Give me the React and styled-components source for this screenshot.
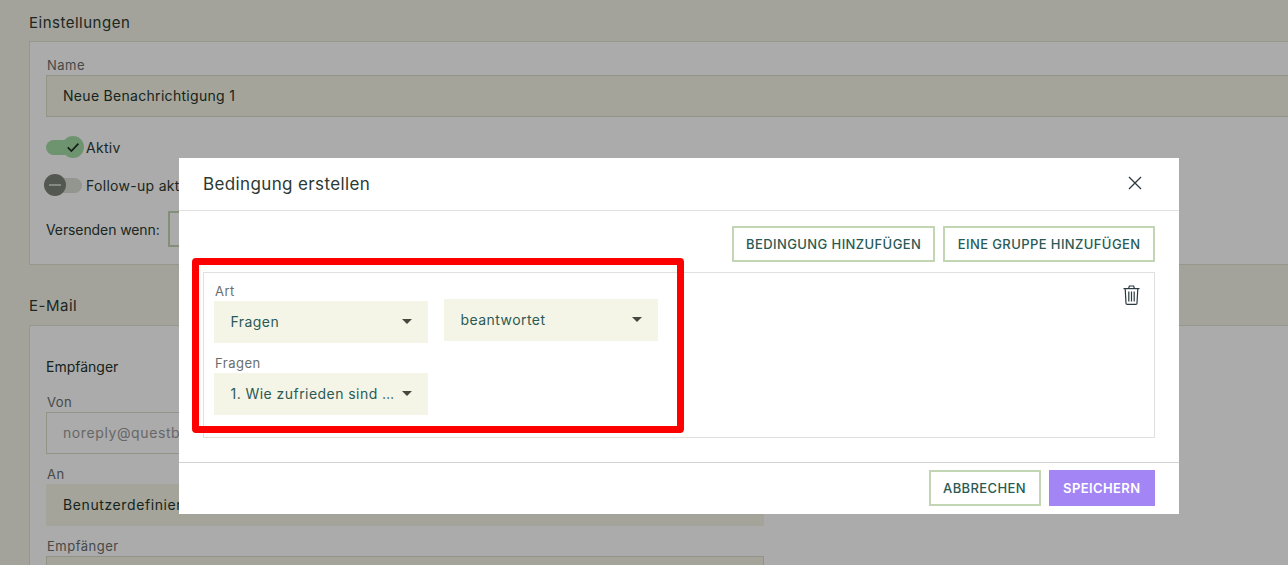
import React from 'react';
import styled, {createGlobalStyle} from 'styled-components';

const GlobalStyle = createGlobalStyle`
  html, body {
    margin: 0;
    padding: 0;
    height: 565px;
    overflow: hidden;
    background: #f4f4e8;
    font-family: Inter, "Liberation Sans", sans-serif;
    color: #24352c;
  }
`;

const Page = styled.div`
  position: relative;
  width: 1288px;
  height: 565px;
  overflow: hidden;
  padding: 14px 0 0 29px;
  box-sizing: border-box;
`;

const SectionTitle = styled.div`
  font-size: 15px;
  line-height: 18px;
  letter-spacing: 0.5px;
  color: #2c3a32;
  margin-bottom: ${({$gap}) => $gap || 9}px;
`;

const Card = styled.div`
  width: 1300px;
  height: ${({$height}) => $height}px;
  box-sizing: border-box;
  background: #fff;
  border: 1px solid #dfe3d0;
  padding: ${({$top}) => $top}px 0 0 16px;
  margin-bottom: ${({$gap}) => $gap || 0}px;
`;

const Label = styled.div`
  font-size: 13px;
  line-height: 16px;
  letter-spacing: 0.5px;
  color: #6a6e6b;
  margin: 0 0 2px 1px;
`;

const Input = styled.div`
  width: ${({$wide}) => ($wide ? '1300px' : '718px')};
  height: 42px;
  box-sizing: border-box;
  display: flex;
  align-items: center;
  padding: 0 0 1px 16px;
  font-size: 14px;
  letter-spacing: ${({$wide}) => ($wide ? 0.3 : 0.6)}px;
  background: ${({$disabled}) => ($disabled ? '#fff' : '#f5f5e7')};
  border: 1px solid ${({$plain}) => ($plain ? 'transparent' : '#dcdccb')};
  color: ${({$disabled}) => ($disabled ? '#9a9a9a' : '#24352c')};
  margin-bottom: ${({$gap}) => $gap || 0}px;
`;

const ToggleRow = styled.div`
  display: flex;
  align-items: center;
  height: 24px;
  margin-top: ${({$top}) => $top}px;
  font-size: 14px;
  letter-spacing: 0.3px;
  color: #2c3a32;
`;

const Track = styled.div`
  position: relative;
  width: ${({$on}) => ($on ? 34 : 36)}px;
  height: 15px;
  border-radius: 8px;
  margin-right: ${({$on}) => ($on ? 6 : 4)}px;
  background: ${({$on}) => ($on ? '#a5dca6' : '#dcdfd6')};
`;

const Knob = styled.div`
  position: absolute;
  top: -4px;
  ${({$on}) => ($on ? 'right: -4px;' : 'left: -2px;')}
  width: 22px;
  height: 22px;
  border-radius: 50%;
  display: flex;
  align-items: center;
  justify-content: center;
  background: ${({$on}) => ($on ? '#a5dca6' : '#7d8379')};
`;

const SendRow = styled.div`
  display: flex;
  align-items: center;
  gap: 8px;
  margin-top: 14px;
  font-size: 14px;
  letter-spacing: -0.1px;
  color: #2c3a32;
`;

const SendButton = styled.div`
  width: 180px;
  height: 36px;
  box-sizing: border-box;
  border: 2px solid #c3d6b4;
`;

const Heading = styled.div`
  font-size: 14px;
  line-height: 18px;
  color: #24352c;
  margin-bottom: 18px;
`;

const Overlay = styled.div`
  position: absolute;
  inset: 0;
  background: rgba(0, 0, 0, 0.33);
`;

const Modal = styled.div`
  position: absolute;
  left: 179px;
  top: 158px;
  width: 1000px;
  height: 356px;
  background: #fff;
  display: flex;
  flex-direction: column;
`;

const ModalHeader = styled.div`
  height: 53px;
  box-sizing: border-box;
  border-bottom: 1px solid #e2e2e2;
  display: flex;
  align-items: center;
  justify-content: space-between;
  padding: 0 37px 0 24px;
  font-size: 17px;
  letter-spacing: 0.37px;
  color: #2b3a33;
`;

const CloseButton = styled.div`
  display: flex;
  margin-bottom: 2px;
`;

const ModalBody = styled.div`
  height: 252px;
  box-sizing: border-box;
  padding: 15px 24px 0;
  border-bottom: 1px solid #d2d2d2;
`;

const Actions = styled.div`
  display: flex;
  justify-content: flex-end;
  gap: 8px;
`;

const Button = styled.div`
  height: 36px;
  box-sizing: border-box;
  display: flex;
  align-items: center;
  padding: 0 ${({$pad}) => $pad || 12}px 1px;
  font-size: 13px;
  font-weight: ${({$primary}) => ($primary ? 600 : 500)};
  letter-spacing: 0.4px;
  color: ${({$primary}) => ($primary ? '#fff' : '#2a5a55')};
  background: ${({$primary}) => ($primary ? '#a385f6' : '#fff')};
  border: ${({$primary}) => ($primary ? 'none' : '2px solid #c3d6b4')};
`;

const ConditionBox = styled.div`
  position: relative;
  height: 166px;
  box-sizing: border-box;
  margin-top: 10px;
  padding: 10px 10px 0;
  border: 1px solid #e0e0e0;
`;

const TrashButton = styled.div`
  position: absolute;
  top: 12px;
  right: 14px;
  display: flex;
`;

const FieldRow = styled.div`
  display: flex;
  align-items: flex-end;
  gap: 16px;
  margin-bottom: 12px;
`;

const Field = styled.div`
  width: 214px;
  margin-bottom: ${({$raised}) => ($raised ? 2 : 0)}px;
`;

const Select = styled.div`
  height: 42px;
  box-sizing: border-box;
  display: flex;
  align-items: center;
  justify-content: space-between;
  padding: 0 16px 1px 16.5px;
  background: #f5f5e7;
  font-size: 14px;
  letter-spacing: 0.45px;
  color: #2a5a55;
`;

const Caret = styled.span`
  width: 0;
  height: 0;
  border-left: 5.5px solid transparent;
  border-right: 5.5px solid transparent;
  border-top: 5px solid #46493f;
`;

const ModalFooter = styled.div`
  padding: 7px 24px 0;
`;

const Highlight = styled.div`
  position: absolute;
  left: 192px;
  top: 258px;
  width: 492px;
  height: 175px;
  box-sizing: border-box;
  border: 7px solid #ff0000;
  border-radius: 4px;
`;

const CloseIcon = () => (
  <svg width="14" height="14" viewBox="0 0 14 14" fill="none" stroke="#2b3a40" strokeWidth="1.3">
    <path d="M1 1 13 13M13 1 1 13" />
  </svg>
);

const CheckIcon = () => (
  <svg width="14" height="14" viewBox="0 0 14 14" fill="none" stroke="#1f2a24" strokeWidth="1.7">
    <path d="M1.8 7.4 5.4 11 12.4 3.6" />
  </svg>
);

const MinusIcon = () => (
  <svg width="12" height="4" viewBox="0 0 12 4" fill="none" stroke="#c9cdc4" strokeWidth="2">
    <path d="M0 2H12" />
  </svg>
);

const TrashIcon = () => (
  <svg width="17" height="20" viewBox="0 0 17 20" fill="none" stroke="#2b3a40" strokeWidth="1.2">
    <path d="M0.5 3.6H16.5" />
    <path d="M5.6 3.4 6.4 1H10.6L11.4 3.4" />
    <path d="M2.2 3.8 3 18.2C3 18.9 3.5 19.4 4.2 19.4H12.8C13.5 19.4 14 18.9 14 18.2L14.8 3.8" />
    <path d="M5.8 6.5V16.6M8.5 6.5V16.6M11.2 6.5V16.6" />
  </svg>
);

const App = () => (
  <>
    <GlobalStyle />
    <Page>
      <SectionTitle>Einstellungen</SectionTitle>
      <Card $height={224} $top={15} $gap={32}>
        <Label>Name</Label>
        <Input $wide>Neue Benachrichtigung 1</Input>
        <ToggleRow $top={18}>
          <Track $on>
            <Knob $on><CheckIcon /></Knob>
          </Track>
          Aktiv
        </ToggleRow>
        <ToggleRow $top={14}>
          <Track>
            <Knob><MinusIcon /></Knob>
          </Track>
          Follow-up aktivieren
        </ToggleRow>
        <SendRow>
          Versenden wenn:
          <SendButton />
        </SendRow>
      </Card>
      <SectionTitle $gap={10}>E-Mail</SectionTitle>
      <Card $height={300} $top={32}>
        <Heading>Empfänger</Heading>
        <Label>Von</Label>
        <Input $disabled $gap={12}>noreply@questback.com</Input>
        <Label>An</Label>
        <Input $plain $gap={12}>Benutzerdefiniert</Input>
        <Label>Empfänger</Label>
        <Input />
      </Card>
      <Overlay />
      <Modal>
        <ModalHeader>
          Bedingung erstellen
          <CloseButton><CloseIcon /></CloseButton>
        </ModalHeader>
        <ModalBody>
          <Actions>
            <Button>BEDINGUNG HINZUFÜGEN</Button>
            <Button $pad={12.5}>EINE GRUPPE HINZUFÜGEN</Button>
          </Actions>
          <ConditionBox>
            <TrashButton><TrashIcon /></TrashButton>
            <FieldRow>
              <Field>
                <Label>Art</Label>
                <Select>Fragen<Caret /></Select>
              </Field>
              <Field $raised>
                <Select>beantwortet<Caret /></Select>
              </Field>
            </FieldRow>
            <FieldRow>
              <Field>
                <Label>Fragen</Label>
                <Select>1. Wie zufrieden sind …<Caret /></Select>
              </Field>
            </FieldRow>
          </ConditionBox>
        </ModalBody>
        <ModalFooter>
          <Actions>
            <Button $pad={12.5}>ABBRECHEN</Button>
            <Button $primary $pad={14.5}>SPEICHERN</Button>
          </Actions>
        </ModalFooter>
      </Modal>
      <Highlight />
    </Page>
  </>
);

export default App;
